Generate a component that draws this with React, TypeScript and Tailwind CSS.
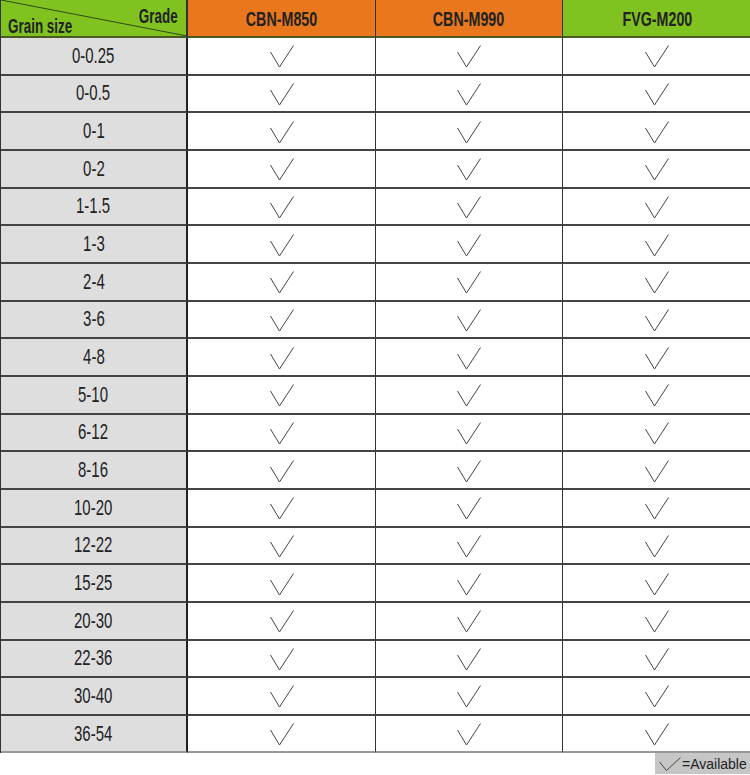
import React from 'react';

const SIZES = [
  '0-0.25', '0-0.5', '0-1', '0-2', '1-1.5', '1-3', '2-4', '3-6', '4-8', '5-10',
  '6-12', '8-16', '10-20', '12-22', '15-25', '20-30', '22-36', '30-40', '36-54',
];

const GRADES = [
  { name: 'CBN-M850', bg: 'bg-[#e8771d]' },
  { name: 'CBN-M990', bg: 'bg-[#e8771d]' },
  { name: 'FVG-M200', bg: 'bg-[#80c21f]' },
];

const Check = ({ className = '' }: { className?: string }) => (
  <svg className={className} width="24" height="23" viewBox="0 0 24 23" fill="none">
    <path d="M0.5 7 L9.5 22 L23.5 0.5" stroke="#444" strokeWidth="1" />
  </svg>
);

const font = { fontFamily: '"Liberation Sans", Arial, sans-serif' };

const App = () => {
  return (
    <div className="w-[750px] h-[775px] bg-white text-[#222]" style={font}>
      <div className="grid grid-cols-[187px_188px_187px_188px] border-l border-l-[#333] border-r-2 border-r-[#999]">
        {/* header */}
        <div className="relative h-[38px] bg-[#80c21f] border-b-2 border-b-[#4a5a22] border-r-2 border-r-[#333] overflow-hidden">
          <svg className="absolute inset-0" width="186" height="36" viewBox="0 0 186 36">
            <line x1="0" y1="0" x2="186" y2="36" stroke="#2f4a10" strokeWidth="1" />
          </svg>
          <span className="absolute right-[8px] top-[5px] inline-block origin-right scale-x-[0.64] text-[21px] font-bold leading-none">
            Grade
          </span>
          <span className="absolute left-[7px] top-[15px] inline-block origin-left scale-x-[0.64] text-[21px] font-bold leading-none whitespace-nowrap">
            Grain size
          </span>
        </div>
        {GRADES.map((g, i) => (
          <div
            key={g.name}
            className={`h-[38px] flex items-center justify-center ${g.bg} border-b-2 border-b-[#4a5a22] ${i < 2 ? 'border-r border-r-[#333]' : ''}`}
          >
            <span className="inline-block scale-x-[0.68] text-[21px] font-bold leading-none">{g.name}</span>
          </div>
        ))}

        {/* rows */}
        {SIZES.map((s, r) => {
          const last = r === SIZES.length - 1;
          const bottom = last ? 'border-b-2 border-b-[#999]' : 'border-b-2 border-b-[#444]';
          return (
            <React.Fragment key={s}>
              <div className={`h-[37.67px] flex items-center justify-center bg-[#dedede] border-r-2 border-r-[#222] ${bottom}`}>
                <span className="inline-block scale-x-[0.68] text-[22px] leading-none text-[#222]">{s}</span>
              </div>
              {GRADES.map((g, i) => (
                <div
                  key={g.name}
                  className={`h-[37.67px] flex items-center justify-center bg-white ${bottom} ${i < 2 ? 'border-r border-r-[#333]' : ''}`}
                >
                  <Check className="mt-[2px]" />
                </div>
              ))}
            </React.Fragment>
          );
        })}
      </div>

      {/* legend */}
      <div className="flex justify-end">
        <div className="h-[21px] w-[95px] bg-[#c6c6c6] flex items-center pl-[4px] gap-[1px]">
          <svg width="22" height="14" viewBox="0 0 22 14" fill="none">
            <path d="M0.5 5 L7.5 13.5 L21.5 0.5" stroke="#444" strokeWidth="1" />
          </svg>
          <span className="text-[14px] leading-none text-[#222]">=Available</span>
        </div>
      </div>
    </div>
  );
};

export default App;
